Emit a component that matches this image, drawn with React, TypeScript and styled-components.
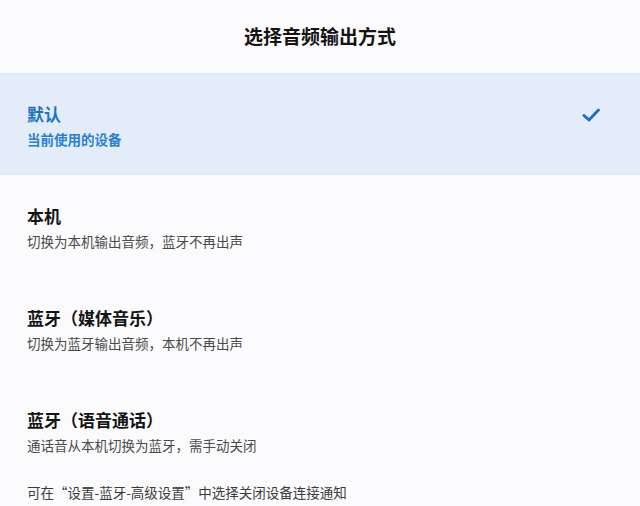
import React from 'react';
import styled, { createGlobalStyle } from 'styled-components';

type Option = {
  id: string;
  title: string;
  desc: string;
};

const OPTIONS: Option[] = [
  { id: 'default', title: '默认', desc: '当前使用的设备' },
  { id: 'phone', title: '本机', desc: '切换为本机输出音频，蓝牙不再出声' },
  { id: 'bt-media', title: '蓝牙（媒体音乐）', desc: '切换为蓝牙输出音频，本机不再出声' },
  { id: 'bt-call', title: '蓝牙（语音通话）', desc: '通话音从本机切换为蓝牙，需手动关闭' },
];

const GlobalStyle = createGlobalStyle`
  html, body {
    margin: 0;
    padding: 0;
    background: #fbfbfd;
  }
  body {
    font-family: "Noto Sans CJK SC", "Noto Sans", sans-serif;
  }
`;

const Page = styled.div`
  width: 640px;
  height: 506px;
  overflow: hidden;
  background: #fbfbfd;
`;

const Header = styled.h1`
  margin: 0;
  height: 73px;
  display: flex;
  align-items: center;
  justify-content: center;
  font-size: 19px;
  font-weight: 700;
  color: #141414;
  padding-bottom: 2px;
  box-sizing: border-box;
`;

const List = styled.ul`
  list-style: none;
  margin: 0;
  padding: 0;
`;

const Row = styled.li<{ $active: boolean }>`
  height: 102px;
  display: flex;
  align-items: center;
  padding: 0 40px 0 27px;
  background: ${({ $active }) => ($active ? '#e3edfa' : 'transparent')};
  box-sizing: border-box;
`;

const Text = styled.div`
  flex: 1;
  display: flex;
  flex-direction: column;
  gap: 3px;
  padding-top: 2px;
`;

const Title = styled.div<{ $active: boolean }>`
  font-size: 17px;
  font-weight: 700;
  line-height: 24px;
  color: ${({ $active }) => ($active ? '#1d72c4' : '#141414')};
`;

const Desc = styled.div<{ $active: boolean }>`
  font-size: 13.5px;
  line-height: 20px;
  font-weight: ${({ $active }) => ($active ? 700 : 400)};
  color: ${({ $active }) => ($active ? '#2a7fd0' : '#4a4a4a')};
`;

const Check = styled.svg`
  width: 18px;
  height: 14px;
  margin-top: -18px;
`;

const Footer = styled.p`
  margin: 1px 0 0 27px;
  font-size: 13.5px;
  line-height: 20px;
  color: #3a3a3a;
`;

const App: React.FC = () => (
  <Page>
    <GlobalStyle />
    <Header>选择音频输出方式</Header>
    <List>
      {OPTIONS.map((opt, i) => {
        const active = i === 0;
        return (
          <Row key={opt.id} $active={active}>
            <Text>
              <Title $active={active}>{opt.title}</Title>
              <Desc $active={active}>{opt.desc}</Desc>
            </Text>
            {active && (
              <Check viewBox="0 0 18 14" fill="none">
                <path
                  d="M2 7.5 L7 12 L16.5 2"
                  stroke="#1d6cbd"
                  strokeWidth="2.8"
                  strokeLinecap="round"
                  strokeLinejoin="round"
                />
              </Check>
            )}
          </Row>
        );
      })}
    </List>
    <Footer>可在“设置-蓝牙-高级设置”中选择关闭设备连接通知</Footer>
  </Page>
);

export default App;
